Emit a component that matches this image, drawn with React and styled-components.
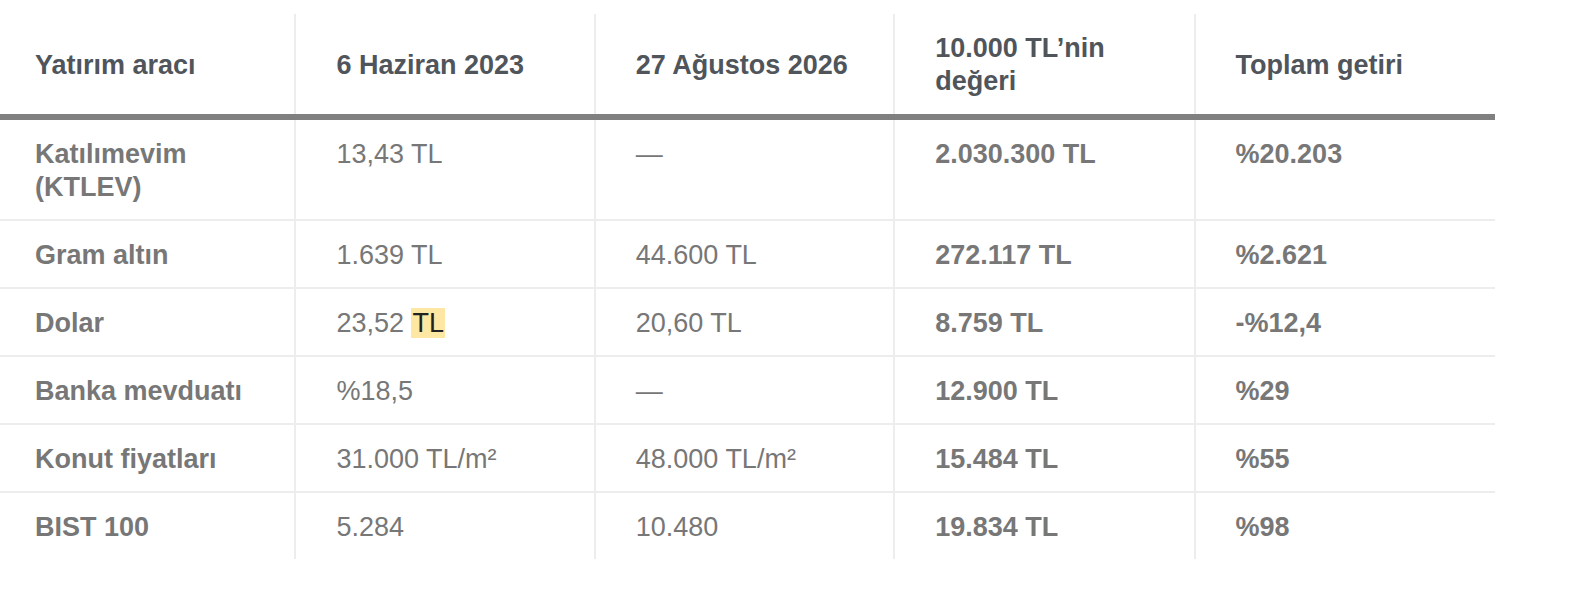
import styled, { createGlobalStyle } from "styled-components";

const GlobalStyle = createGlobalStyle`
  body {
    margin: 0;
    background: #ffffff;
    font-family: "Liberation Sans", Arial, Helvetica, sans-serif;
  }
`;

const rows = [
  { name: "Katılımevim (KTLEV)", start: "13,43 TL", end: "—", value: "2.030.300 TL", total: "%20.203" },
  { name: "Gram altın", start: "1.639 TL", end: "44.600 TL", value: "272.117 TL", total: "%2.621" },
  { name: "Dolar", start: "23,52", mark: "TL", end: "20,60 TL", value: "8.759 TL", total: "-%12,4" },
  { name: "Banka mevduatı", start: "%18,5", end: "—", value: "12.900 TL", total: "%29" },
  { name: "Konut fiyatları", start: "31.000 TL/m²", end: "48.000 TL/m²", value: "15.484 TL", total: "%55" },
  { name: "BIST 100", start: "5.284", end: "10.480", value: "19.834 TL", total: "%98" },
];

function App() {
  return (
    <Page>
      <GlobalStyle />
      <Table>
        <colgroup>
          <col style={{ width: 294 }} />
          <col style={{ width: 299 }} />
          <col style={{ width: 299 }} />
          <col style={{ width: 300 }} />
          <col style={{ width: 301 }} />
        </colgroup>
        <thead>
          <tr>
            <HeadCell>Yatırım aracı</HeadCell>
            <HeadCell>6 Haziran 2023</HeadCell>
            <HeadCell>27 Ağustos 2026</HeadCell>
            <HeadCell>
              10.000 TL’nin
              <br />
              değeri
            </HeadCell>
            <HeadCell>Toplam getiri</HeadCell>
          </tr>
        </thead>
        <tbody>
          {rows.map((row, index) => (
            <Row key={index} $last={index === rows.length - 1}>
              <Cell $bold>{row.name}</Cell>
              <Cell>
                {row.start}
                {row.mark && (
                  <>
                    {" "}
                    <Mark>{row.mark}</Mark>
                  </>
                )}
              </Cell>
              <Cell>{row.end}</Cell>
              <Cell $bold>{row.value}</Cell>
              <Cell $bold>{row.total}</Cell>
            </Row>
          ))}
        </tbody>
      </Table>
    </Page>
  );
}

const Page = styled.div`
  padding-top: 14px;
  width: 1570px;
  height: 598px;
`;

const Table = styled.table`
  width: 1495px;
  table-layout: fixed;
  border-collapse: separate;
  border-spacing: 0;
  font-size: 27px;
  line-height: 33px;
`;

// the divider is an inset shadow so the thick rule below runs unbroken
const HeadCell = styled.th`
  text-align: left;
  vertical-align: middle;
  font-weight: 700;
  color: #50555b;
  padding: 18px 24px 16px 42px;
  border-bottom: 6px solid #808080;
  box-shadow: inset 2px 0 0 #ededed;

  &:first-child {
    padding-left: 35px;
    box-shadow: none;
  }
`;

const Row = styled.tr`
  td {
    border-bottom: ${(p) => (p.$last ? "none" : "2px solid #ededed")};
  }
`;

const Cell = styled.td`
  vertical-align: top;
  color: #777777;
  font-weight: ${(p) => (p.$bold ? 700 : 400)};
  padding: 18px 24px 15px 40px;
  border-left: 2px solid #ededed;

  &:first-child {
    padding-left: 35px;
    border-left: none;
  }
`;

const Mark = styled.mark`
  background: #fde7a2;
  color: #222222;
  padding: 0 1px;
`;

export default App;
